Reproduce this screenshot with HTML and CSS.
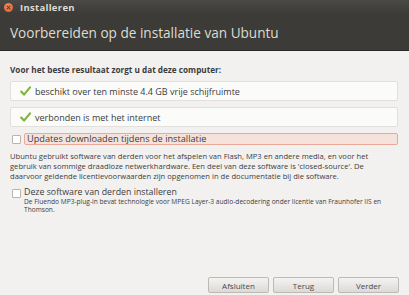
FILE: index.html
```html
<!DOCTYPE html>
<html lang="nl">
<head>
  <meta charset="UTF-8" />
  <title>Installeren</title>
  <link rel="stylesheet" href="styles.css">
</head>
<body>

  <div class="window">
    <div class="titlebar">
      <span class="close-btn"></span>
      <span class="title">Installeren</span>
    </div>

    <header>
      <h1>Voorbereiden op de installatie van Ubuntu</h1>
    </header>

    <div class="content">
      <p class="intro">Voor het beste resultaat zorgt u dat deze computer:</p>

      <div class="req-box">
        <svg class="check" width="11" height="10" viewBox="0 0 11 10">
          <path d="M1.2 5.6 L4 8.6 L10 1.4" fill="none" stroke="#82b53c" stroke-width="2.2" stroke-linecap="round" stroke-linejoin="round"/>
        </svg>
        <span>beschikt over ten minste 4.4 GB vrije schijfruimte</span>
      </div>

      <div class="req-box">
        <svg class="check" width="11" height="10" viewBox="0 0 11 10">
          <path d="M1.2 5.6 L4 8.6 L10 1.4" fill="none" stroke="#82b53c" stroke-width="2.2" stroke-linecap="round" stroke-linejoin="round"/>
        </svg>
        <span>verbonden is met het internet</span>
      </div>

      <label class="check-row updates">
        <span class="checkbox"></span>
        <span class="highlight">Updates downloaden tijdens de installatie</span>
      </label>

      <p class="info">Ubuntu gebruikt software van derden voor het afspelen van Flash, MP3 en andere media, en voor het gebruik van sommige draadloze netwerkhardware. Een deel van deze software is 'closed-source'. De daarvoor geldende licentievoorwaarden zijn opgenomen in de documentatie bij die software.</p>

      <label class="check-row third-party">
        <span class="checkbox"></span>
        <span>
          <span class="option">Deze software van derden installeren</span>
          <span class="note">De Fluendo MP3-plug-in bevat technologie voor MPEG Layer-3 audio-decodering onder licentie van Fraunhofer IIS en Thomson.</span>
        </span>
      </label>
    </div>

    <div class="buttons">
      <button>Afsluiten</button>
      <button>Terug</button>
      <button>Verder</button>
    </div>
  </div>

</body>
</html>
```

FILE: styles.css
```css
body {
  margin: 0;
  padding: 0;
  font-family: 'Open Sans', 'DejaVu Sans', sans-serif;
  background: #f2f1f0;
  color: #3c3c3c;
}
.window {
  width: 409px;
  height: 295px;
  display: flex;
  flex-direction: column;
  overflow: hidden;
}
.titlebar {
  height: 14px;
  background: linear-gradient(to bottom, #4a4945, #3c3b37);
  display: flex;
  align-items: center;
  padding-left: 4px;
}
.close-btn {
  width: 9px;
  height: 9px;
  border-radius: 50%;
  background: radial-gradient(circle at 40% 35%, #f58c5a, #e0582a);
  position: relative;
}
.close-btn::before,
.close-btn::after {
  content: "";
  position: absolute;
  left: 4px;
  top: 2px;
  width: 1px;
  height: 5px;
  background: #3c3b37;
  transform: rotate(45deg);
}
.close-btn::after {
  transform: rotate(-45deg);
}
.title {
  margin-left: 7px;
  font-size: 9.5px;
  font-weight: bold;
  letter-spacing: 0.3px;
  color: #dfdbd2;
}
header {
  height: 36px;
  background: #3c3b37;
  display: flex;
  align-items: center;
  padding-left: 10px;
  border-bottom: 1px solid #2b2a27;
}
header h1 {
  margin: 0;
  font-size: 13.6px;
  font-weight: normal;
  color: #dfdbd2;
}
.content {
  flex: 1;
  padding: 13px 11px 0 10px;
  font-size: 7.5px;
}
.intro {
  margin: 0 0 6px;
  font-size: 8.2px;
  font-weight: bold;
}
.req-box {
  height: 18px;
  display: flex;
  align-items: center;
  background: #fbfbfa;
  border: 1px solid #e2e0dd;
  border-radius: 2px;
  margin-bottom: 6px;
  padding-left: 9px;
  font-size: 9px;
}
.check {
  margin-right: 4px;
}
.check-row {
  display: flex;
  align-items: flex-start;
}
.updates {
  margin-top: 3px;
}
.checkbox {
  width: 7px;
  height: 7px;
  border: 1px solid #b7b4b0;
  border-radius: 1px;
  background: #fff;
  margin: 2px 3px 0 2px;
  flex-shrink: 0;
}
.highlight {
  flex: 1;
  height: 10px;
  line-height: 10px;
  font-size: 9.2px;
  background: #f5e3db;
  border: 1px solid #e9a996;
  border-radius: 2px;
  padding-left: 2px;
}
.info {
  margin: 6px 0 6px;
  max-width: 378px;
  font-size: 7.6px;
  line-height: 10px;
}
.third-party .checkbox {
  margin-top: 2px;
}
.option {
  display: block;
  font-size: 8.8px;
  line-height: 11px;
}
.note {
  display: block;
  font-size: 6.6px;
  line-height: 8px;
}
.buttons {
  display: flex;
  justify-content: flex-end;
  gap: 4px;
  padding: 0 10px 2px 0;
}
.buttons button {
  width: 61px;
  height: 16px;
  font-family: inherit;
  font-size: 8px;
  color: #4a4a4a;
  background: linear-gradient(to bottom, #f4f3f2, #dcdad7);
  border: 1px solid #bdb9b4;
  border-radius: 2px;
  padding: 0;
}
```
